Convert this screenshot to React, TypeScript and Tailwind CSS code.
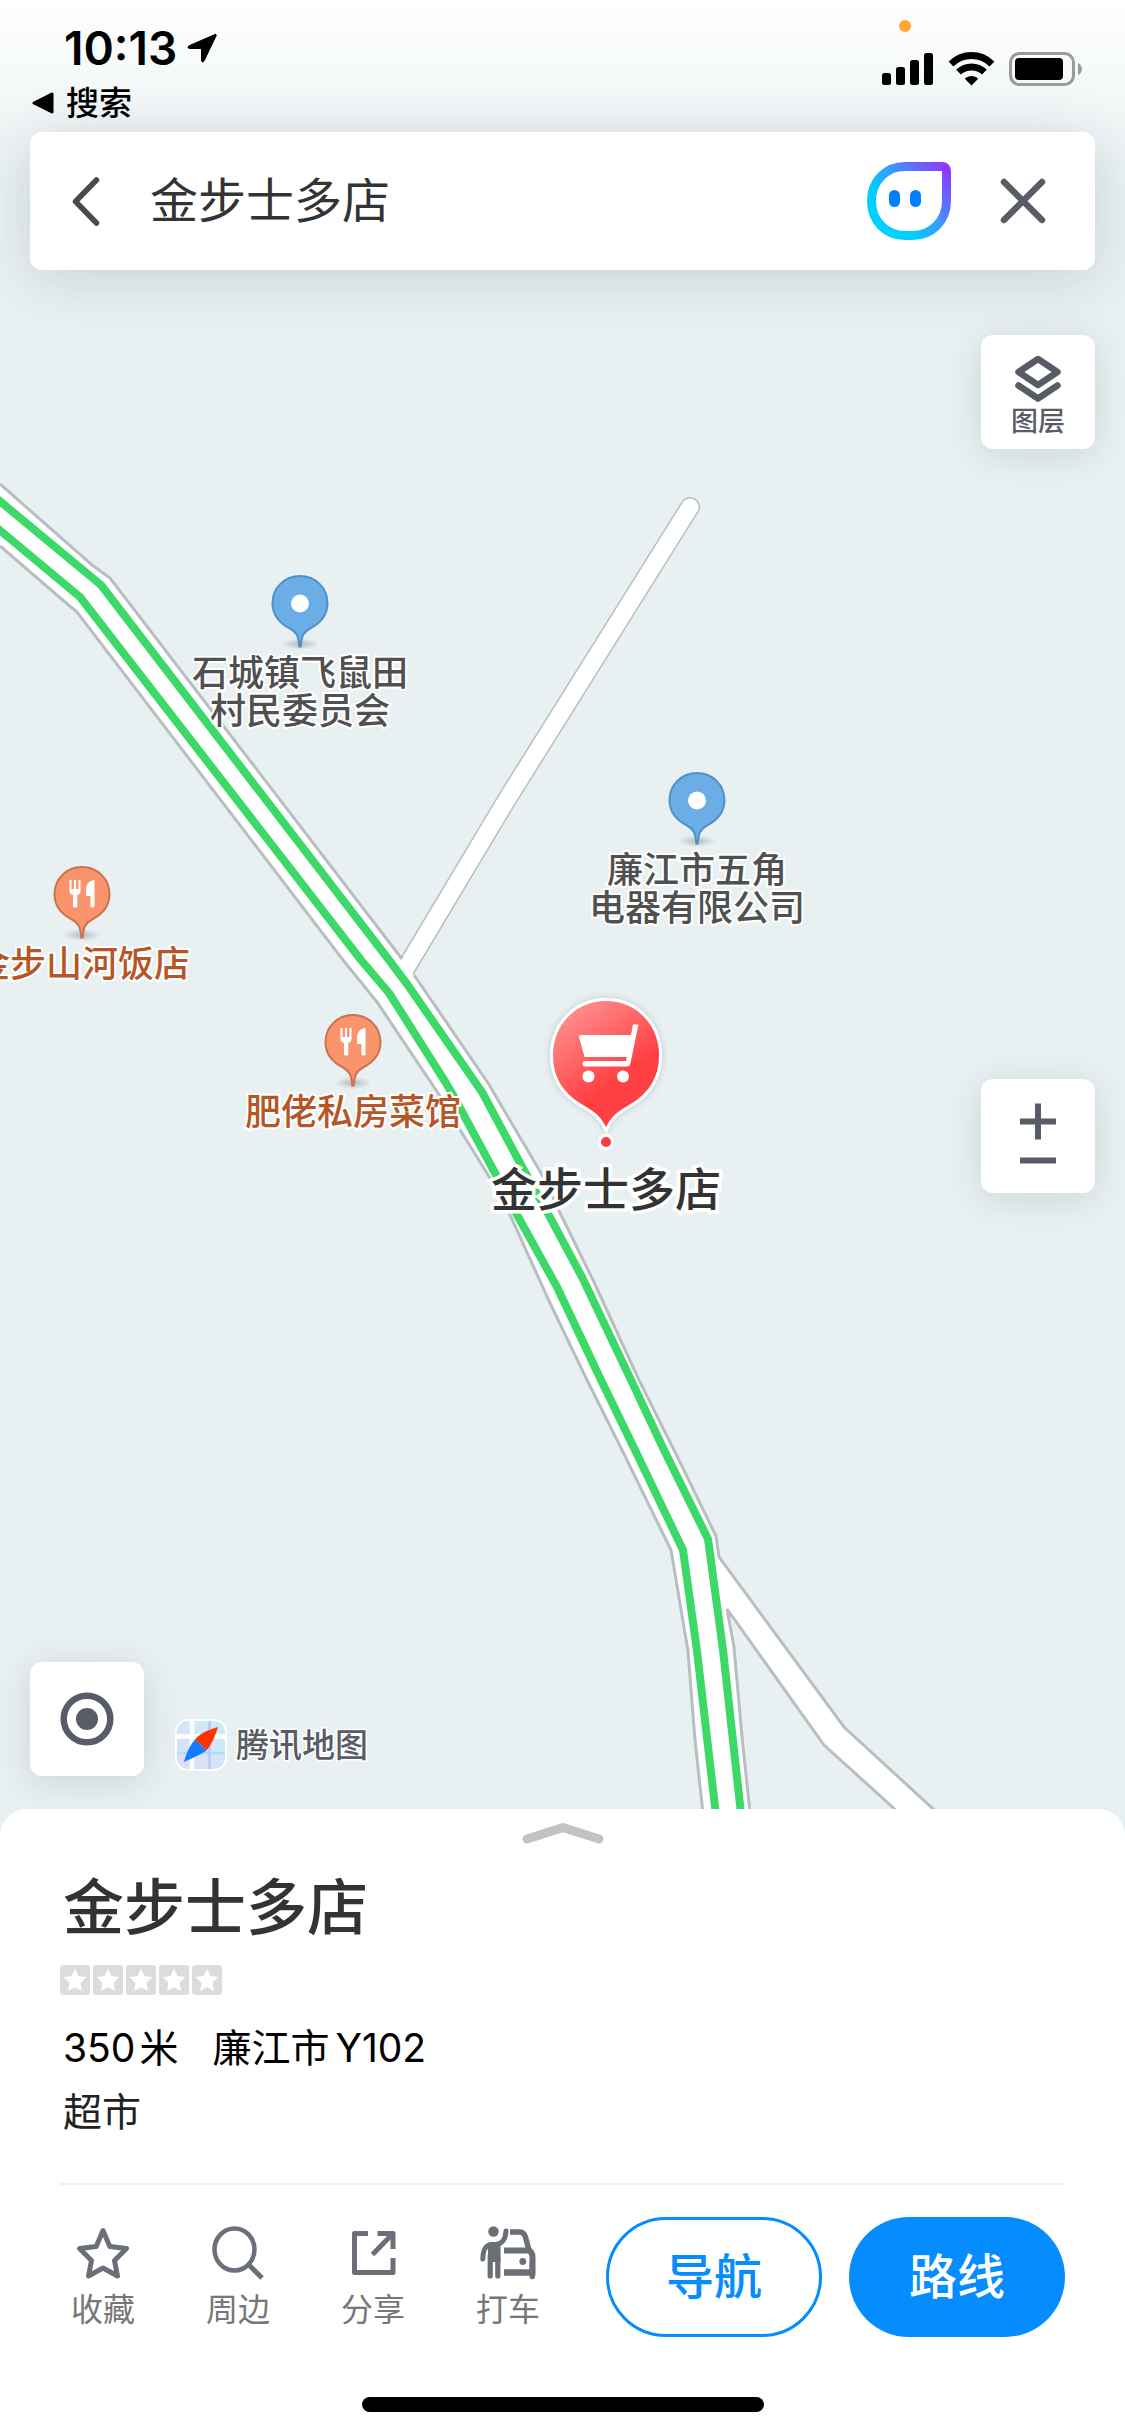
import React from 'react';

interface Poi {
  id: string;
  kind: 'place' | 'food';
  x: number;
  y: number;
  lines: string[];
}

interface Action {
  label: string;
  icon: React.ReactNode;
}

const POIS: Poi[] = [
  { id: 'committee', kind: 'place', x: 300, y: 575, lines: ['石城镇飞鼠田', '村民委员会'] },
  { id: 'electric', kind: 'place', x: 697, y: 772, lines: ['廉江市五角', '电器有限公司'] },
  { id: 'shanhe', kind: 'food', x: 82, y: 866, lines: ['金步山河饭店'] },
  { id: 'feilao', kind: 'food', x: 353, y: 1014, lines: ['肥佬私房菜馆'] },
];

const FONT = "font-['Inter','Noto_Sans_CJK_SC',sans-serif]";
const CARD = 'rounded-xl bg-white shadow-[0_6px_36px_rgba(40,50,60,0.14)]';

const StarIcon = () => (
  <svg className="h-[60px] w-[60px]" viewBox="0 0 60 60" fill="none" stroke="currentColor" strokeWidth="5" strokeLinejoin="round">
    <path d="M30 7.500L36.800 23.500L53.500 25.500L41.500 37.500L44.500 53L30 45L15.500 53L18.500 37.500L6.500 25.500L23.200 23.500Z" />
  </svg>
);

const NearbyIcon = () => (
  <svg className="h-[60px] w-[60px]" viewBox="0 0 60 60" fill="none" stroke="currentColor" strokeWidth="4.500">
    <ellipse cx="26.500" cy="26.500" rx="20" ry="21" />
    <path d="M40.500 41.500L54 55" strokeWidth="5" />
  </svg>
);

const ShareIcon = () => (
  <svg className="h-[60px] w-[60px]" viewBox="0 0 60 60" fill="none" stroke="currentColor" strokeWidth="5" strokeLinejoin="round">
    <path d="M25 10.500H11.500V49.500H50V35" />
    <path d="M34.500 10.500H50V26" />
    <path d="M48.500 12L29.500 31.500" />
  </svg>
);

const TaxiIcon = () => (
  <svg className="h-[60px] w-[60px]" viewBox="0 0 60 60" fill="none" stroke="currentColor">
    <circle cx="15.500" cy="8.500" r="5.200" fill="currentColor" stroke="none" />
    <path d="M10 20L20 20L22.500 23V39H10Z" fill="currentColor" stroke="none" />
    <path d="M28 8C27.500 16 25 20.500 18 21.500H13C6.500 22.500 5 28 4.800 36" strokeWidth="5" strokeLinecap="round" />
    <path d="M12.200 33V53M19.800 33V53" strokeWidth="5.200" strokeLinecap="round" />
    <path d="M32 9H42C45.500 9 46.500 11 47.500 14L51 27.500" strokeWidth="5.500" />
    <path d="M26 27.500H51C54 29 54.500 31 54.500 34V52" strokeWidth="6" />
    <path d="M26 49.500H54" strokeWidth="6.500" />
    <path d="M54.300 40V53.500" strokeWidth="5.500" strokeLinecap="round" />
    <circle cx="44.800" cy="38.500" r="3.400" fill="currentColor" stroke="none" />
  </svg>
);

const ACTIONS: Action[] = [
  { label: '收藏', icon: <StarIcon /> },
  { label: '周边', icon: <NearbyIcon /> },
  { label: '分享', icon: <ShareIcon /> },
  { label: '打车', icon: <TaxiIcon /> },
];

const Roads = () => (
  <svg className="absolute top-0 left-0" width="1125" height="1850" viewBox="0 0 1125 1850" fill="none" aria-hidden="true">
    {/* Side lane */}
    <g strokeLinecap="round" strokeLinejoin="round">
      <path d="M690 507L506 801L400 978" stroke="#b7bfc1" strokeWidth="20" />
      <path d="M690 507L506 801L400 978" stroke="#fff" strokeWidth="17" />
    </g>
    {/* Branch to the south-east */}
    <path d="M719 1557L844 1727L980 1852H942L824 1745L727 1608Z" fill="#fff" />
    {/* Main road */}
    <path
      d="M0 484L92 565L110 578L402 959L414 975L488 1083L541 1173L561 1215L593 1280L639 1380L674 1450L716 1536L719 1557L728 1610L734 1647L742 1737L754 1850H707L695 1740L688 1651L671 1550L622 1450L587 1380L550 1303L511 1217L493 1183L459 1128L438 1093L377 1002L343 960L77 612L65 602L0 546Z"
      fill="#fff"
    />
    <g stroke="#b7bfc1" strokeWidth="3">
      <path d="M0 484L92 565L110 578L402 959" />
      <path d="M414 975L488 1083L541 1173L561 1215L593 1280L639 1380L674 1450L716 1536L719 1557L844 1727L980 1852" />
      <path d="M942 1852L824 1745L727 1609L734 1647L742 1737L754 1850" />
      <path d="M0 546L65 602L77 612L343 960L377 1002L438 1093L459 1128L493 1183L511 1217L550 1303L587 1380L622 1450L671 1550L688 1651L695 1740L707 1850" />
    </g>
    <g stroke="#3cd868" strokeWidth="8" strokeLinejoin="round">
      <path d="M-4 498L101 585L389 960L407 984L482 1092L520 1163L545 1208L582 1277L631 1380L664 1450L708 1539L723 1650L745 1850" />
      <path d="M-4 527L80 597L361 960L389 993L446 1083L453 1095L495 1173L516 1213L557 1287L601 1380L635 1450L683 1550L697 1651L720 1850" />
    </g>
  </svg>
);

const PoiPin: React.FC<{ kind: Poi['kind'] }> = ({ kind }) => (
  <svg className="h-20 w-16" viewBox="0 0 64 80" fill="none">
    <defs>
      <radialGradient id={`ground-${kind}`}>
        <stop offset="0" stopColor="#7d878a" stopOpacity="0.5" />
        <stop offset="1" stopColor="#7d878a" stopOpacity="0" />
      </radialGradient>
    </defs>
    <ellipse cx="32" cy="69" rx="19" ry="6" fill={`url(#ground-${kind})`} />
    <path
      d="M32 1C16.500 1 4.500 13 4.500 28C4.500 40 12 48.500 22 53.500C28.500 57 30.500 61 31.300 71.500H32.700C33.500 61 35.500 57 42 53.500C52 48.500 59.500 40 59.500 28C59.500 13 47.500 1 32 1Z"
      fill={kind === 'place' ? '#6baee6' : '#f9946c'}
      stroke={kind === 'place' ? '#5090c5' : '#c97350'}
      strokeWidth="2"
    />
    {kind === 'place' ? (
      <circle cx="32" cy="28.500" r="9" fill="#fff" />
    ) : (
      <g fill="#fff">
        <path d="M19.500 14H21.500V23H24V14H26V23H28.500V14H30.500V25C30.500 27.500 29 28.500 27.300 29V40C27.300 42 23 42 23 40V29C21 28.500 19.500 27.500 19.500 25Z" />
        <path d="M44.500 14V40C44.500 42 40.500 42 40.500 40V30H36V24C36 18 39.500 14.500 44.500 14Z" />
      </g>
    )}
  </svg>
);

const PoiMarker: React.FC<{ poi: Poi }> = ({ poi }) => (
  <div
    className="absolute flex -translate-x-1/2 flex-col items-center"
    style={{ left: poi.x, top: poi.y }}
  >
    <PoiPin kind={poi.kind} />
    <p
      className={`-mt-px text-center text-[36px] leading-[38px] font-medium whitespace-pre [-webkit-text-stroke:4px_white] [paint-order:stroke_fill] ${
        poi.kind === 'place' ? 'text-[#505050]' : 'text-[#b55626]'
      }`}
    >
      {poi.lines.join('\n')}
    </p>
  </div>
);

const SelectedMarker = () => (
  <div className="absolute top-[990px] left-[606px] flex -translate-x-1/2 flex-col items-center">
    <svg className="h-[168px] w-[140px]" viewBox="0 0 140 168" fill="none">
      <defs>
        <linearGradient id="pin" x1="25" y1="20" x2="90" y2="110" gradientUnits="userSpaceOnUse">
          <stop offset="0" stopColor="#ff9292" />
          <stop offset="0.8" stopColor="#ff4143" />
          <stop offset="1" stopColor="#ff4143" />
        </linearGradient>
        <filter id="pinShadow" x="-20%" y="-20%" width="140%" height="140%">
          <feDropShadow dx="0" dy="0" stdDeviation="3" floodColor="#3c464b" floodOpacity="0.25" />
        </filter>
      </defs>
      <path
        d="M70 9.500C39 9.500 15.500 34 15.500 65.500C15.500 88 27 105 45 115.500C58 123 64 127 70 140.500C76 127 82 123 95 115.500C113 105 124.500 88 124.500 65.500C124.500 34 101 9.500 70 9.500Z"
        fill="url(#pin)"
        stroke="#fff"
        strokeWidth="3"
        filter="url(#pinShadow)"
      />
      <path
        d="M97 34.500H102.500L94.500 73C94 75.500 93 76.500 90.500 76.500H49C45.500 76.500 45.500 71 49 71H90L90.800 67H48.500L43 47C42.800 45.500 43.500 45 45 45H95Z"
        fill="#fff"
      />
      <circle cx="52.500" cy="86.500" r="6" fill="#fff" />
      <circle cx="87" cy="86.500" r="6" fill="#fff" />
      <circle cx="70" cy="152" r="6.500" fill="#ff3b3b" stroke="#fff" strokeWidth="3" />
    </svg>
    <span className="mt-[5px] text-[46px] leading-[52px] font-medium whitespace-nowrap text-[#333] [-webkit-text-stroke:7px_white] [paint-order:stroke_fill]">
      金步士多店
    </span>
  </div>
);

const StatusBar = () => (
  <div className="flex h-[132px] justify-between pr-[42px] pl-8">
    <div className="flex flex-col pt-[22px]">
      <div className="flex items-center gap-[10px] pl-8">
        <span className="text-[46px] leading-[52px] font-semibold text-black">10:13</span>
        <svg className="h-[30px] w-[30px]" viewBox="0 0 30 30">
          <path d="M28 1.500L2 12.800C0.300 13.700 1 15.500 2.500 15.500H14.500V27.500C14.500 29 16.300 29.500 17 28L29 3C29.500 1.800 29 1 28 1.500Z" stroke="#000" />
        </svg>
      </div>
      <a href="#search" className="mt-1 flex items-center gap-3 text-[33px] leading-[50px] font-medium text-black">
        <svg className="h-[22px] w-[22px]" viewBox="0 0 22 22">
          <path d="M20 2V20L2 11Z" stroke="#000" strokeWidth="3" strokeLinejoin="round" />
        </svg>
        搜索
      </a>
    </div>
    <div className="flex flex-col pt-5">
      <span className="ml-[17px] h-3 w-3 rounded-full bg-[#ffa733]" />
      <div className="mt-5 flex items-center gap-[14px]">
        <svg className="h-[34px] w-[52px]" viewBox="0 0 52 34">
          <rect x="0" y="21" width="9" height="12" rx="2.500" />
          <rect x="14" y="15" width="9" height="18" rx="2.500" />
          <rect x="28" y="8" width="9" height="25" rx="2.500" />
          <rect x="42" y="1" width="9" height="32" rx="2.500" />
        </svg>
        <svg className="h-[34px] w-[47px]" viewBox="0 0 47 34" fill="none" stroke="#000">
          <path d="M3 12C15 0.800 32 0.800 44 12" strokeWidth="7" />
          <path d="M10.500 20C18 13.200 29 13.200 36.500 20" strokeWidth="7" />
          <path d="M23.500 33.500L16.800 26.800C20.500 23 26.500 23 30.200 26.800Z" fill="#000" stroke="none" />
        </svg>
        <svg className="h-[34px] w-[74px]" viewBox="0 0 74 34" fill="none">
          <rect x="1.500" y="1.500" width="63" height="31" rx="9" stroke="#999b9c" strokeWidth="3" />
          <rect x="6" y="6" width="48" height="22" rx="4" fill="#000" />
          <path d="M69 11C74.300 13 74.300 21 69 23Z" fill="#999b9c" />
        </svg>
      </div>
    </div>
  </div>
);

const SearchBar = () => (
  <div className="mx-[30px] flex h-[138px] items-center rounded-xl bg-white pr-12 pl-10 shadow-[0_8px_56px_rgba(40,50,60,0.16)]">
    <button type="button" aria-label="返回" className="flex w-20 shrink-0 text-[#4a4a4a]">
      <svg className="h-[50px] w-[32px]" viewBox="0 0 32 50" fill="none" stroke="currentColor" strokeWidth="5.500" strokeLinecap="round" strokeLinejoin="round">
        <path d="M26.500 4L5.500 25.500L26.500 47" />
      </svg>
    </button>
    <input
      type="text"
      aria-label="搜索地点"
      defaultValue="金步士多店"
      className="min-w-0 flex-1 bg-transparent text-[48px] leading-[72px] text-[#333] outline-none"
    />
    <button type="button" aria-label="语音助手" className="shrink-0">
      <svg className="h-[78px] w-[84px]" viewBox="0 0 84 78" fill="none">
        <defs>
          <linearGradient id="bot" x1="16" y1="60" x2="80" y2="4" gradientUnits="userSpaceOnUse">
            <stop offset="0.150" stopColor="#00cfff" />
            <stop offset="0.500" stopColor="#3d96ff" />
            <stop offset="1" stopColor="#9333ff" />
          </linearGradient>
        </defs>
        <path d="M38 4.500H75Q79.500 4.500 79.500 9V39C79.500 59 64.500 73.500 45.500 73.500H38C19 73.500 4.500 59 4.500 39C4.500 19 19 4.500 38 4.500Z" stroke="url(#bot)" strokeWidth="9" />
        <rect x="22" y="28" width="11" height="17" rx="5.500" fill="#007fff" />
        <rect x="43" y="28" width="11" height="17" rx="5.500" fill="#007fff" />
      </svg>
    </button>
    <button type="button" aria-label="关闭" className="ml-12 shrink-0 text-[#585c66]">
      <svg className="h-[48px] w-[48px]" viewBox="0 0 48 48" fill="none" stroke="currentColor" strokeWidth="6.500" strokeLinecap="round">
        <path d="M5 5L43 43M43 5L5 43" />
      </svg>
    </button>
  </div>
);

const MapControls = () => (
  <div className="flex flex-1 flex-col px-[30px] pt-[65px] pb-[33px] text-[#585c66]">
    <button type="button" className={`flex h-[114px] w-[114px] flex-col items-center self-end pt-5 ${CARD}`}>
      <svg className="h-[48px] w-[48px]" viewBox="0 0 48 48" fill="none" stroke="currentColor" strokeWidth="6.500" strokeLinejoin="round" strokeLinecap="round">
        <path d="M24 4L43.500 17L24 30L4.500 17Z" />
        <path d="M4.500 30.500L24 43.500L43.500 30.500" />
      </svg>
      <span className="text-[27px] leading-[38px] font-medium">图层</span>
    </button>

    <div className={`mt-[630px] flex h-[114px] w-[114px] flex-col items-center self-end overflow-hidden ${CARD}`}>
      <button type="button" aria-label="放大" className="flex h-16 w-full items-end justify-center">
        <svg className="h-[44px] w-[36px]" viewBox="0 0 36 44" fill="none" stroke="currentColor" strokeWidth="6">
          <path d="M0 22.500H36M18 4.500V40.500" />
        </svg>
      </button>
      <button type="button" aria-label="缩小" className="flex w-full flex-1 justify-center">
        <svg className="h-9 w-[36px]" viewBox="0 0 36 36" fill="none" stroke="currentColor" strokeWidth="6">
          <path d="M0 17.500H36" />
        </svg>
      </button>
    </div>

    <div className="mt-auto flex items-end gap-[30px]">
      <button type="button" aria-label="定位" className={`flex h-[114px] w-[114px] items-center justify-center ${CARD}`}>
        <svg className="h-[54px] w-[54px]" viewBox="0 0 54 54">
          <circle cx="27" cy="27" r="23.300" fill="none" stroke="currentColor" strokeWidth="6.500" />
          <circle cx="27" cy="27" r="11" fill="currentColor" />
        </svg>
      </button>
      <div className="flex items-center gap-2 pb-1">
        <svg className="h-[54px] w-[54px]" viewBox="0 0 54 54">
          <defs>
            <linearGradient id="tile" x1="10" y1="54" x2="44" y2="0" gradientUnits="userSpaceOnUse">
              <stop offset="0" stopColor="#dedcf8" />
              <stop offset="1" stopColor="#c8eef6" />
            </linearGradient>
            <clipPath id="tileClip">
              <rect x="3" y="3" width="48" height="48" rx="11" />
            </clipPath>
          </defs>
          <rect x="1" y="1" width="52" height="52" rx="13" fill="#fff" opacity="0.900" />
          <g clipPath="url(#tileClip)">
            <rect x="3" y="3" width="48" height="48" fill="url(#tile)" />
            <path d="M18 0V54M0 18.500H54" stroke="#fff" strokeWidth="4.500" />
            <path d="M0 35H54" stroke="#a9e2ec" strokeWidth="2.500" />
            <path d="M35.500 0V54" stroke="#b9c9f3" strokeWidth="2.500" />
          </g>
          <path d="M44 9C34 12 25 16 21 21.500L32.500 32.500C37 27 41 19 44 9Z" fill="#ff3300" />
          <path d="M10 44C12 36 16 27 21 21.500L32.500 32.500C26 37 18 40 10 44Z" fill="#147dff" />
        </svg>
        <span className="text-[33px] leading-[48px] font-medium [-webkit-text-stroke:3px_white] [paint-order:stroke_fill]">腾讯地图</span>
      </div>
    </div>
  </div>
);

const PlaceSheet = () => (
  <section className="flex flex-col rounded-t-[27px] bg-white px-[60px]">
    <button type="button" aria-label="展开详情" className="mx-auto mt-3">
      <svg className="h-6 w-[84px]" viewBox="0 0 84 24" fill="none" stroke="#c2c2c2" strokeWidth="9" strokeLinecap="round" strokeLinejoin="round">
        <path d="M6 18L42 6.500L78 18" />
      </svg>
    </button>
    <h1 className="mt-[19px] pl-[3px] text-[61px] leading-[88px] font-medium text-[#333]">金步士多店</h1>
    <div className="mt-[13px] flex gap-[3px]" role="img" aria-label="暂无评分">
      {[0, 1, 2, 3, 4].map((i) => (
        <svg key={i} className="h-[30px] w-[30px]" viewBox="0 0 30 30">
          <rect width="30" height="30" rx="3" fill="#dcdcdc" />
          <path d="M15 3.500L18.400 11L26.500 12L20.500 17.800L22 26L15 22.200L8 26L9.500 17.800L3.500 12L11.600 11Z" fill="#fff" />
        </svg>
      ))}
    </div>
    <div className="mt-6 flex pl-[3px] text-[39px] leading-[58px] text-black">
      <span className="mr-1">350</span>
      <span className="mr-[34px]">米</span>
      <span className="mr-1.5">廉江市</span>
      <span>Y102</span>
    </div>
    <p className="mt-[6px] pl-[3px] text-[39px] leading-[58px] text-[#222]">超市</p>

    <div className="mt-[42px] flex items-start justify-between border-t-2 border-[#f0f0f0] pt-8">
      <div className="flex gap-[49px]">
        {ACTIONS.map((action) => (
          <button key={action.label} type="button" className="flex w-[86px] flex-col items-center pt-[6px] text-[#6b6f77]">
            {action.icon}
            <span className="mt-[5px] text-[32px] leading-[44px] text-[#777]">{action.label}</span>
          </button>
        ))}
      </div>
      <div className="flex gap-[27px]">
        <button type="button" className="h-[120px] w-[216px] rounded-full border-3 border-[#058cff] text-[48px] font-medium text-[#058cff]">
          导航
        </button>
        <button type="button" className="h-[120px] w-[216px] rounded-full bg-[#058cff] text-[48px] font-medium text-white">
          路线
        </button>
      </div>
    </div>

    <div className="mx-auto mt-[60px] mb-6 h-[15px] w-2/5 rounded-full bg-black" />
  </section>
);

export default function App() {
  return (
    <main className={`relative flex min-h-screen flex-col overflow-hidden bg-[#e8f0f2] ${FONT}`}>
      <div className="absolute inset-0">
        <Roads />
        {POIS.map((poi) => (
          <PoiMarker key={poi.id} poi={poi} />
        ))}
        <SelectedMarker />
      </div>
      <div className="absolute inset-x-0 top-0 h-48 bg-linear-to-b from-white to-transparent" />

      <div className="relative flex flex-1 flex-col">
        <StatusBar />
        <SearchBar />
        <MapControls />
        <PlaceSheet />
      </div>
    </main>
  );
}
